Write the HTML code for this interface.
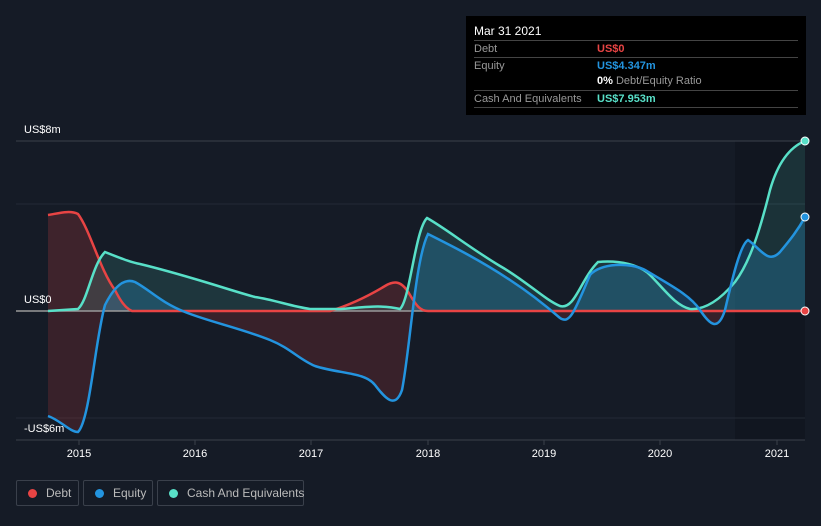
<!DOCTYPE html>
<html><head><style>
body{margin:0;background:#151b26;width:821px;height:526px;overflow:hidden;font-family:"Liberation Sans",sans-serif;position:relative}
.tt{position:absolute;left:466px;top:16px;width:340px;height:99px;background:#000;color:#fff;font-size:11px}
.tt .r{position:absolute;left:8px;width:324px;border-top:1px solid #444;height:16px;line-height:16px;color:#999}
.tt .v{position:absolute;left:123px;font-weight:bold}
.lg{position:absolute;top:480px;height:26px;border:1px solid #3a404b;border-radius:2px;color:#bbb;font-size:12px;line-height:24px;box-sizing:border-box;white-space:nowrap}
.lg i{display:inline-block;width:9px;height:9px;border-radius:50%;margin:0 9px 0 11px;vertical-align:-1px}
</style></head><body>
<svg width="821" height="526" style="position:absolute;left:0;top:0">
<defs>
<clipPath id="up"><rect x="0" y="0" width="821" height="311"/></clipPath>
<clipPath id="dn"><rect x="0" y="311" width="821" height="200"/></clipPath>
</defs>
<rect x="735" y="141" width="70" height="299" fill="#111620"/>
<line x1="16" y1="141" x2="805" y2="141" stroke="#3a404b"/>
<line x1="16" y1="204" x2="805" y2="204" stroke="#232935"/>
<line x1="16" y1="418" x2="805" y2="418" stroke="#232935"/>
<line x1="16" y1="440" x2="805" y2="440" stroke="#3a404b"/>
<g stroke="#3a404b"><line x1="79" y1="440" x2="79" y2="445"/><line x1="195" y1="440" x2="195" y2="445"/><line x1="311" y1="440" x2="311" y2="445"/><line x1="428" y1="440" x2="428" y2="445"/><line x1="544" y1="440" x2="544" y2="445"/><line x1="660" y1="440" x2="660" y2="445"/><line x1="777" y1="440" x2="777" y2="445"/></g>
<path d="M48,311 L48,215 C60,213 70,210 78,214 C90,230 100,270 115,290 C120,300 125,308 132,311 L330,311 C350,305 370,295 385,286 C395,280 402,281 410,295 C416,305 420,311 428,311 Z" fill="#e84444" fill-opacity="0.2"/>
<path id="ef" d="M48,311 L48,416 C60,420 70,432 78,432 C90,420 95,340 105,305 C115,285 125,278 135,282 C150,290 160,302 185,312 C210,322 240,328 270,340 C290,348 300,360 315,366 C340,374 365,372 375,385 C385,398 395,410 402,390 C410,350 415,260 428,234 C450,245 480,260 510,280 C530,293 545,305 560,318 C570,325 575,310 590,275 C600,263 630,262 645,270 C670,285 690,295 700,310 C710,325 718,332 725,310 C732,280 740,245 748,240 C760,248 768,265 780,252 C790,240 798,230 805,217 L805,311 Z" fill="#2394df" fill-opacity="0.25" clip-path="url(#up)"/>
<path d="M48,311 L48,416 C60,420 70,432 78,432 C90,420 95,340 105,305 C115,285 125,278 135,282 C150,290 160,302 185,312 C210,322 240,328 270,340 C290,348 300,360 315,366 C340,374 365,372 375,385 C385,398 395,410 402,390 C410,350 415,260 428,234 C450,245 480,260 510,280 C530,293 545,305 560,318 C570,325 575,310 590,275 C600,263 630,262 645,270 C670,285 690,295 700,310 C710,325 718,332 725,310 C732,280 740,245 748,240 C760,248 768,265 780,252 C790,240 798,230 805,217 L805,311 Z" fill="#e84444" fill-opacity="0.17" clip-path="url(#dn)"/>
<path d="M48,311 L78,309 C88,300 92,265 105,252 C120,258 130,262 140,264 C165,270 185,276 205,282 C225,288 240,293 255,297 C275,300 290,306 310,309 L340,309 C360,308 380,304 400,309 C410,300 415,230 427,218 C445,228 470,248 500,266 C525,280 545,300 560,306 C575,310 580,280 598,262 C620,260 640,265 650,275 C665,290 675,305 690,309 C705,310 720,300 735,282 C750,262 760,230 770,190 C780,155 795,145 805,141 L805,311 Z" fill="#58d9c3" fill-opacity="0.15"/>
<line x1="16" y1="311" x2="805" y2="311" stroke="#999" stroke-width="1.5"/>
<path d="M48,215 C60,213 70,210 78,214 C90,230 100,270 115,290 C120,300 125,308 132,311 L330,311 C350,305 370,295 385,286 C395,280 402,281 410,295 C416,305 420,311 428,311 L805,311" fill="none" stroke="#e84444" stroke-width="2.5"/>
<path d="M48,311 L78,309 C88,300 92,265 105,252 C120,258 130,262 140,264 C165,270 185,276 205,282 C225,288 240,293 255,297 C275,300 290,306 310,309 L340,309 C360,308 380,304 400,309 C410,300 415,230 427,218 C445,228 470,248 500,266 C525,280 545,300 560,306 C575,310 580,280 598,262 C620,260 640,265 650,275 C665,290 675,305 690,309 C705,310 720,300 735,282 C750,262 760,230 770,190 C780,155 795,145 805,141" fill="none" stroke="#58e0c8" stroke-width="2.5"/>
<path d="M48,416 C60,420 70,432 78,432 C90,420 95,340 105,305 C115,285 125,278 135,282 C150,290 160,302 185,312 C210,322 240,328 270,340 C290,348 300,360 315,366 C340,374 365,372 375,385 C385,398 395,410 402,390 C410,350 415,260 428,234 C450,245 480,260 510,280 C530,293 545,305 560,318 C570,325 575,310 590,275 C600,263 630,262 645,270 C670,285 690,295 700,310 C710,325 718,332 725,310 C732,280 740,245 748,240 C760,248 768,265 780,252 C790,240 798,230 805,217" fill="none" stroke="#2394df" stroke-width="2.5"/>
<circle cx="805" cy="141" r="4" fill="#58e0c8" stroke="#fff" stroke-width="1"/>
<circle cx="805" cy="217" r="4" fill="#2394df" stroke="#fff" stroke-width="1"/>
<circle cx="805" cy="311" r="4" fill="#e84444" stroke="#fff" stroke-width="1"/>
<g fill="#fff" font-size="11" font-family="Liberation Sans">
<text x="24" y="133">US$8m</text><text x="24" y="303">US$0</text><text x="24" y="432">-US$6m</text>
<g text-anchor="middle"><text x="79" y="457">2015</text><text x="195" y="457">2016</text><text x="311" y="457">2017</text><text x="428" y="457">2018</text><text x="544" y="457">2019</text><text x="660" y="457">2020</text><text x="777" y="457">2021</text></g>
</g>
</svg>
<div class="tt">
<div style="position:absolute;left:8px;top:8px;font-size:12px">Mar 31 2021</div>
<div class="r" style="top:24px">Debt<span class="v" style="color:#e84444">US$0</span></div>
<div class="r" style="top:41px">Equity<span class="v" style="color:#2394df">US$4.347m</span></div>
<div class="r" style="top:57px;border:0"><span class="v" style="color:#fff">0% <span style="color:#999;font-weight:normal">Debt/Equity Ratio</span></span></div>
<div class="r" style="top:74px;border-bottom:1px solid #444">Cash And Equivalents<span class="v" style="color:#58e0c8">US$7.953m</span></div>
</div>
<div class="lg" style="left:16px;width:63px"><i style="background:#e84444"></i>Debt</div>
<div class="lg" style="left:83px;width:70px"><i style="background:#2394df"></i>Equity</div>
<div class="lg" style="left:157px;width:147px"><i style="background:#58e0c8"></i>Cash And Equivalents</div>
</body></html>
